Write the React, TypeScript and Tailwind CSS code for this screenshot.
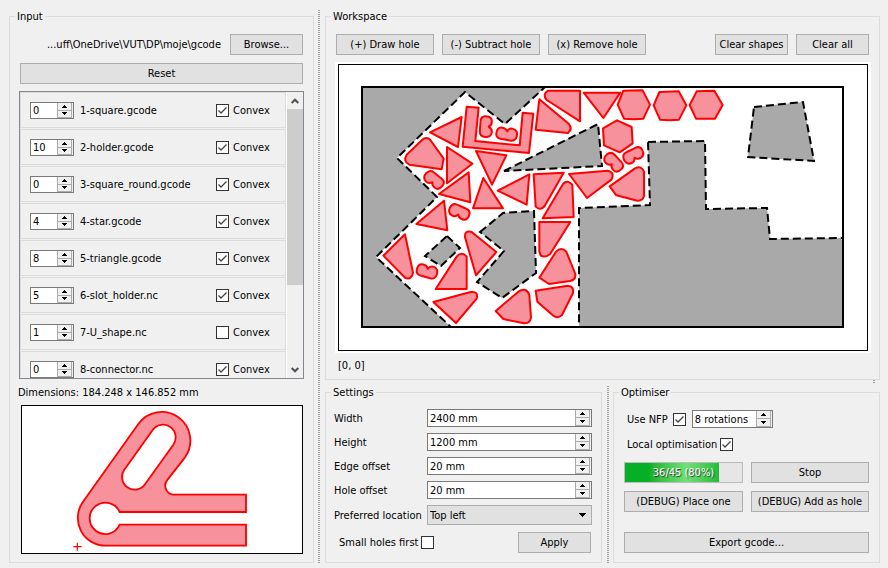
import { useState, type ReactNode } from "react";

type Part = { name: string; count: number; convex: boolean };

const parts: Part[] = [
  { name: "1-square.gcode", count: 0, convex: true },
  { name: "2-holder.gcode", count: 10, convex: true },
  { name: "3-square_round.gcode", count: 0, convex: true },
  { name: "4-star.gcode", count: 4, convex: true },
  { name: "5-triangle.gcode", count: 8, convex: true },
  { name: "6-slot_holder.nc", count: 5, convex: true },
  { name: "7-U_shape.nc", count: 1, convex: false },
  { name: "8-connector.nc", count: 0, convex: true },
];

const holes = [
  "M362 87H545L505 124L465 92L397 158L437 197L376 257L451 327H362Z",
  "M504 171L598 124L602 166Z",
  "M480 232L503 213L534 211L536 273L502 298L477 282L504 251Z",
  "M447 236L460 248L441 266L425 256Z",
  "M648 142L705 141L706 209L767 208L770 239L843 238V327H579V208L650 205Z",
  "M754 107L803 102L814 161L748 157Z",
];

const connector =
  "M-31 2C-31 -10 -26 -17 -16 -17C-8 -17 -2 -13 0 -8C3 -14 10 -19 17 -18C27 -17 32 -8 31 2C30 12 24 18 15 18C5 18 -4 17 -14 17C-25 17 -31 11 -31 2Z";

// Placed parts, grouped by sheet region; each group has its own origin and is stored at 3 units per pixel.
const placed = [
  {
    origin: "translate(350 80) scale(0.33333)",
    connectors: [
      "translate(408 140) rotate(92)",
      "translate(470 162) rotate(8)",
      "translate(252 300) rotate(217)",
    ],
    paths: [
      "M335 111L324 201L240 157Z",
      "M170 224L216 180Q229 168 241 180L281 236L275 268L178 254Q158 244 170 224Z",
      "M350 80L386 83L376 183L509 196L518 98L550 101L537 219L338 200Z",
      "M291 201L367 251L291 310Z",
      "M378 213L469 226L426 314Z",
      "M356 277L361 367L267 342Z",
      "M400 294L459 385H369Z",
      "M538 283L530 374L443 332Z",
    ],
  },
  {
    origin: "translate(500 80) scale(0.33333)",
    connectors: ["translate(341 247) rotate(225)", "translate(400 226) rotate(152)"],
    paths: [
      "M240 32V124L140 60Q126 43 144 32Z",
      "M118 58L206 131Q219 146 204 159L107 149Z",
      "M251 38H361L310 114Z",
      "M370 32L428 31L450 74L430 116L402 118L372 116L353 74Z",
      "M478 36L536 34L559 76L537 119L508 121L480 119L461 76Z",
      "M590 34L643 32L668 75L645 116L588 116L569 75Z",
      "M351 121L395 141L398 190L359 217L312 196L309 145Z",
      "M101 283L191 278L134 378Q121 394 107 380Z",
      "M207 282L322 272Q345 276 335 298L261 354Z",
      "M329 319L405 265Q425 256 432 275V348Q428 363 412 362L349 346Z",
    ],
  },
  {
    origin: "translate(350 200) scale(0.33333)",
    connectors: ["translate(328 36) rotate(202)", "translate(231 214) rotate(14)"],
    paths: [
      "M282 2L292 91L199 72Z",
      "M165 103L189 218Q186 240 166 234L100 167Z",
      "M257 267L320 170Q335 153 350 170V267Z",
      "M345 112Q343 90 365 96L439 156L378 226Z",
      "M250 306L362 276Q386 273 380 296L318 369Z",
      "M437 333L505 275Q530 260 538 285L543 353Q540 371 522 370L460 357Z",
    ],
  },
  {
    origin: "translate(500 200) scale(0.33333)",
    connectors: [],
    paths: [
      "M128 55L189 -48Q202 -62 217 -46L221 51Z",
      "M118 66H211L150 163Q137 174 122 167L118 155Z",
      "M118 233L168 155Q184 139 199 155L226 222Q228 239 210 243L147 252Z",
      "M107 272L203 257Q223 259 219 279L186 345Q173 357 160 347L112 305Z",
    ],
  },
];

function Group({ title, className = "", children }: { title: string; className?: string; children: ReactNode }) {
  return (
    <fieldset className={`flex min-w-0 flex-col border border-[#dcdcdc] ${className}`}>
      <legend className="ml-[5px] px-0.5 pt-px leading-4">{title}</legend>
      {children}
    </fieldset>
  );
}

function Button({ className = "", children }: { className?: string; children: ReactNode }) {
  return (
    <button
      type="button"
      className={`h-[21px] whitespace-nowrap border border-[#adadad] bg-[#e1e1e1] pt-px text-center leading-4 ${className}`}
    >
      {children}
    </button>
  );
}

function Check({ id, defaultChecked }: { id: string; defaultChecked?: boolean }) {
  return (
    <span className="grid size-[13px] shrink-0">
      <input
        id={id}
        type="checkbox"
        defaultChecked={defaultChecked}
        className="peer col-start-1 row-start-1 size-[13px] appearance-none border border-[#333] bg-white"
      />
      <svg
        viewBox="0 0 13 13"
        className="pointer-events-none invisible col-start-1 row-start-1 size-[13px] fill-none stroke-[#444] peer-checked:visible"
        strokeWidth="1.3"
      >
        <path d="M2.5 6.5L5 9L10.5 3.5" />
      </svg>
    </span>
  );
}

function Spin({ id, label, value, className = "" }: { id?: string; label?: string; value: string; className?: string }) {
  const [text, setText] = useState(value);
  const step = (by: number) => setText((t) => t.replace(/^\d+/, (n) => String(Math.max(0, Number(n) + by))));
  return (
    <div className={`flex border border-[#7a7a7a] bg-white ${className}`}>
      <input
        id={id}
        aria-label={label}
        value={text}
        onChange={(e) => setText(e.target.value)}
        className="w-0 min-w-0 flex-1 bg-white pt-px pl-0.5 outline-none"
      />
      <div className="flex w-4 shrink-0 flex-col bg-[#f0f0f0] pr-px">
        <button
          type="button"
          aria-label="Increase"
          onClick={() => step(1)}
          className="flex flex-1 items-center justify-center border-x border-b border-[#acacac]"
        >
          <svg viewBox="0 0 5 3" className="h-[3px] w-[5px]">
            <path d="M2 0h1v1h1v1h1v1H0V2h1V1h1z" />
          </svg>
        </button>
        <button
          type="button"
          aria-label="Decrease"
          onClick={() => step(-1)}
          className="flex flex-1 items-center justify-center border-x border-b border-[#acacac]"
        >
          <svg viewBox="0 0 5 3" className="h-[3px] w-[5px]">
            <path d="M0 0h5v1H4v1H3v1H2V2H1V1H0z" />
          </svg>
        </button>
      </div>
    </div>
  );
}

function Grip({ className = "" }: { className?: string }) {
  return (
    <div
      className={`w-0.5 bg-[repeating-linear-gradient(to_bottom,#a0a0a0_0_1px,transparent_1px_2px)] ${className}`}
    />
  );
}

function PartRow({ part, index }: { part: Part; index: number }) {
  return (
    <li className="flex h-9 shrink-0 items-center border border-[#dcdcdc] pt-px pr-3.5 pl-[9px]">
      <Spin label={`Count of ${part.name}`} value={String(part.count)} className="h-[17px] w-11" />
      <span className="ml-1.5 flex-1 pt-px">{part.name}</span>
      <Check id={`convex-${index}`} defaultChecked={part.convex} />
      <label htmlFor={`convex-${index}`} className="ml-1 w-[38px] pt-px">
        Convex
      </label>
    </li>
  );
}

function PartList() {
  return (
    <div className="mt-[7px] flex min-h-0 flex-1 border border-[#828790]">
      <ul className="flex min-w-0 flex-1 flex-col gap-px overflow-hidden">
        {parts.map((part, i) => (
          <PartRow key={part.name} part={part} index={i} />
        ))}
      </ul>
      <div className="flex w-[17px] flex-col border-l border-white bg-[#f0f0f0]">
        <button type="button" aria-label="Scroll up" className="flex h-[17px] items-center justify-center">
          <svg viewBox="0 0 8 6" className="h-1.5 w-2 fill-none stroke-[#505050]" strokeWidth="2">
            <path d="M.7 5L4 1.7L7.3 5" />
          </svg>
        </button>
        <div className="flex flex-1 flex-col">
          <div className="h-[70%] bg-[#cdcdcd]" />
        </div>
        <button type="button" aria-label="Scroll down" className="flex h-[17px] items-center justify-center">
          <svg viewBox="0 0 8 6" className="h-1.5 w-2 fill-none stroke-[#505050]" strokeWidth="2">
            <path d="M.7 1L4 4.3L7.3 1" />
          </svg>
        </button>
      </div>
    </div>
  );
}

function PartPreview() {
  return (
    <div className="mt-1 mr-px ml-0.5 h-[149px] border border-black bg-white">
      <svg viewBox="66 77 840 441" className="h-full w-full" role="img" aria-label="Part preview">
        <path
          fillRule="evenodd"
          className="fill-[#f7929c] stroke-[#f00]"
          strokeWidth="5.5"
          d="M316 496H738V433H359A47 47 0 1 1 359 395H738V343H522A27 27 0 0 1 501 300L555 231A86 86 0 0 0 415 131L248 366A83 83 0 0 0 316 496Z
             M458 149A38 38 0 0 1 520 193L435 312A38 38 0 0 1 373 268Z"
        />
        <path className="stroke-[#f00]" strokeWidth="3.5" d="M220 499H245M232 487V511" />
      </svg>
    </div>
  );
}

function WorkspaceCanvas() {
  return (
    <div className="mt-[7px] flex min-h-0 flex-1 bg-white px-[3px] py-0.5">
      <div className="flex min-h-0 flex-1 border border-black">
        <svg viewBox="339 65 528 285" className="h-full w-full" role="img" aria-label="Workspace">
          <g className="fill-[#a9a9a9] stroke-black" strokeWidth="2" strokeDasharray="8 4">
            {holes.map((d) => (
              <path key={d} d={d} />
            ))}
          </g>
          <rect x="362" y="87" width="481" height="240" fill="none" stroke="black" strokeWidth="2" />
          {placed.map((group) => (
            <g
              key={group.origin}
              transform={group.origin}
              className="fill-[#f7929c] stroke-[#f00]"
              strokeWidth="6"
              strokeLinejoin="round"
            >
              {group.paths.map((d) => (
                <path key={d} d={d} />
              ))}
              {group.connectors.map((t) => (
                <path key={t} transform={t} d={connector} />
              ))}
            </g>
          ))}
        </svg>
      </div>
    </div>
  );
}

const settings = [
  { id: "width", label: "Width", value: "2400 mm" },
  { id: "height", label: "Height", value: "1200 mm" },
  { id: "edge", label: "Edge offset", value: "20 mm" },
  { id: "hole", label: "Hole offset", value: "20 mm" },
];

function Settings() {
  return (
    <Group title="Settings">
      <div className="grid grid-cols-[93px_minmax(0,1fr)] items-center gap-y-1.5 pt-2 pr-[9px] pl-2">
        {settings.map((s) => (
          <div key={s.id} className="contents">
            <label htmlFor={s.id} className="pt-px">
              {s.label}
            </label>
            <Spin id={s.id} value={s.value} className="h-[18px]" />
          </div>
        ))}
        <label htmlFor="location" className="whitespace-nowrap pt-px">
          Preferred location
        </label>
        <div className="grid items-center">
          <select
            id="location"
            className="col-start-1 row-start-1 h-5 appearance-none border border-[#adadad] bg-[#e1e1e1] pt-px pl-0.5"
          >
            <option>Top left</option>
            <option>Top right</option>
            <option>Bottom left</option>
          </select>
          <svg
            viewBox="0 0 7 4"
            className="pointer-events-none col-start-1 row-start-1 mr-1.5 h-1 w-[7px] justify-self-end"
          >
            <path d="M0 0h7v1H6v1H5v1H4v1H3V3H2V2H1V1H0z" />
          </svg>
        </div>
      </div>
      <div className="mt-[7px] flex items-center pr-2.5 pb-[9px] pl-[13px]">
        <label htmlFor="small-first" className="mr-[3px] pt-px">
          Small holes first
        </label>
        <Check id="small-first" />
        <Button className="ml-auto w-[73px]">Apply</Button>
      </div>
    </Group>
  );
}

function Optimiser() {
  const done = 36;
  const total = 45;
  return (
    <Group title="Optimiser">
      <div className="flex items-center pt-[9px] pl-[13px]">
        <label htmlFor="nfp" className="mr-[5px] pt-px">
          Use NFP
        </label>
        <Check id="nfp" defaultChecked />
        <Spin label="Rotations" value="8 rotations" className="ml-1.5 h-[18px] w-[81px]" />
      </div>
      <div className="mt-2 flex h-4 items-center pl-[13px]">
        <label htmlFor="local" className="mr-[3px] pt-px">
          Local optimisation
        </label>
        <Check id="local" defaultChecked />
      </div>
      <div className="mt-2.5 grid grid-cols-[minmax(0,119fr)_minmax(0,118fr)] gap-2 px-2.5">
        <div
          role="progressbar"
          aria-valuenow={done}
          aria-valuemax={total}
          className="grid h-[21px] border border-[#bcbcbc] bg-[#e6e6e6]"
        >
          <div
            className="col-start-1 row-start-1 bg-linear-to-r from-[#06b025] from-25% via-[#6fe276] via-65% to-[#1fbc39]"
            style={{ width: `${(done / total) * 100}%` }}
          />
          <span className="col-start-1 row-start-1 self-center pt-px text-center text-white [text-shadow:1px_1px_1px_#333]">
            36/45 (80%)
          </span>
        </div>
        <Button className="border-[#9aa5b0]">Stop</Button>
        <Button>(DEBUG) Place one</Button>
        <Button>(DEBUG) Add as hole</Button>
      </div>
      <div className="mt-5 flex px-2.5 pb-[9px]">
        <Button className="flex-1">Export gcode...</Button>
      </div>
    </Group>
  );
}

export default function App() {
  return (
    <main className="flex h-screen min-h-[480px] bg-[#f0f0f0] pt-2 pr-2 pb-[5px] pl-[9px] font-['DejaVu_Sans_Condensed','DejaVu_Sans',sans-serif] text-[11px] leading-4 text-black">
      <Group title="Input" className="w-[305px] shrink-0">
        <div className="flex min-h-0 flex-1 flex-col px-[9px] pt-[9px] pb-2">
          <div className="mx-px flex items-center justify-end gap-[9px]">
            <span className="pt-px">...uff\OneDrive\VUT\DP\moje\gcode</span>
            <Button className="w-[73px]">Browse...</Button>
          </div>
          <Button className="mx-px mt-2 shrink-0">Reset</Button>
          <PartList />
          <p className="mt-1.5 -ml-px">Dimensions: 184.248 x 146.852 mm</p>
          <PartPreview />
        </div>
      </Group>
      <Grip className="mt-0.5 mr-[5px] ml-1" />
      <div className="flex min-w-0 flex-1 flex-col">
        <Group title="Workspace" className="min-h-0 flex-1">
          <div className="flex min-h-0 flex-1 flex-col pt-[9px] pr-2 pb-[5px] pl-[9px]">
            <div className="mr-0.5 ml-px flex gap-2">
              <Button className="w-[98px]">(+) Draw hole</Button>
              <Button className="w-[98px]">(-) Subtract hole</Button>
              <Button className="mr-auto w-[98px]">(x) Remove hole</Button>
              <Button className="w-[73px]">Clear shapes</Button>
              <Button className="w-[73px]">Clear all</Button>
            </div>
            <WorkspaceCanvas />
            <p className="mt-[5px] ml-[3px]">[0, 0]</p>
          </div>
        </Group>
        <Grip className="mr-[5px] h-1 shrink-0 self-end" />
        <div className="grid grid-cols-[minmax(0,277fr)_11px_minmax(0,267fr)]">
          <Settings />
          <Grip className="mt-0.5 justify-self-center" />
          <Optimiser />
        </div>
      </div>
    </main>
  );
}
